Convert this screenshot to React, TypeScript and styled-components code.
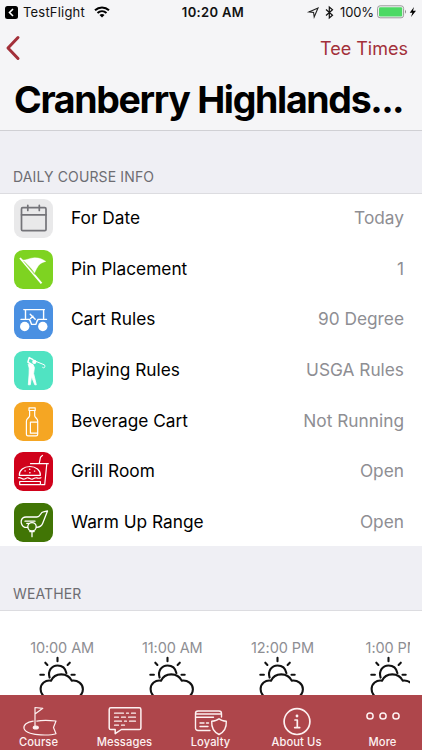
import React from 'react';
import styled, { createGlobalStyle } from 'styled-components';

const GlobalStyle = createGlobalStyle`
  * { box-sizing: border-box; }
  body { margin: 0; background: #fff; font-family: Inter, "Liberation Sans", sans-serif; }
  svg { display: block; flex: none; overflow: visible; }
`;

const Screen = styled.main`
  width: 422px;
  height: 750px;
  overflow: hidden;
  display: flex;
  flex-direction: column;
  background: #fff;
`;

const Header = styled.header`
  height: 131px;
  flex: none;
  background: #f5f5f7;
  border-bottom: 1px solid #d0d0d4;
`;

const StatusBar = styled.div`
  height: 24px;
  display: grid;
  grid-template-columns: 1fr auto 1fr;
  align-items: center;
  padding: 0 6px 0 5px;
  font-size: 13px;
  color: #111;
`;

const StatusGroup = styled.div<{ $end?: boolean }>`
  display: flex;
  align-items: center;
  justify-content: ${p => (p.$end ? 'flex-end' : 'flex-start')};
`;

const AppName = styled.span`
  margin: 0 9px 0 5px;
  letter-spacing: 0.2px;
`;

const Clock = styled.span`
  font-weight: 600;
  letter-spacing: 0.35px;
  padding-left: 5px;
`;

const BluetoothIcon = styled.svg`
  margin-left: 6px;
`;

const Percent = styled.span`
  margin: 0 3px 0 6px;
  letter-spacing: -0.1px;
`;

const NavBar = styled.nav`
  height: 48px;
  display: flex;
  align-items: center;
  justify-content: space-between;
  padding: 0 14px 0 6px;
`;

const NavLink = styled.span`
  color: #a3303a;
  font-size: 18px;
  letter-spacing: 0;
`;

const Title = styled.h1`
  margin: 0;
  padding: 5px 0 0 14px;
  font-size: 37.5px;
  line-height: 46px;
  font-weight: 700;
  letter-spacing: -1.33px;
  white-space: nowrap;
  color: #000;
`;

const Ellipsis = styled.span`
  letter-spacing: -1.7px;
`;

const SectionHeader = styled.h2<{ $height: number }>`
  height: ${p => p.$height}px;
  flex: none;
  margin: 0;
  display: flex;
  align-items: flex-end;
  padding: 0 13px 8px;
  background: #efeff4;
  border-bottom: 1px solid #dcdce0;
  color: #6d6d72;
  font-size: 14px;
  line-height: 17px;
  font-weight: 400;
  letter-spacing: 0.13px;
`;

const List = styled.ul`
  height: 353px;
  flex: none;
  margin: -1px 0 0;
  padding: 0.4px 0 0;
  list-style: none;
  display: grid;
  grid-template-rows: repeat(7, 50.6px);
`;

const Row = styled.li`
  display: flex;
  align-items: center;
  padding: 0 18px 0 14px;
  font-size: 17.3px;
  line-height: 20px;
  color: #000;
`;

const Tile = styled.span<{ $color: string; $ink?: string }>`
  width: 39px;
  height: 39px;
  margin-right: 18px;
  border-radius: 9px;
  background: ${p => p.$color};
  color: ${p => p.$ink || '#fff'};
`;

const RowLabel = styled.span`
  flex: 1;
  padding-bottom: 1px;
`;

const RowValue = styled.span`
  padding-bottom: 1px;
  color: #8e8e93;
`;

const Forecast = styled.section`
  flex: 1;
  min-height: 0;
  margin-right: 12px;
  padding: 27px 0 0 7px;
  display: flex;
  overflow: hidden;
`;

const Hour = styled.div`
  width: 110.2px;
  flex: none;
  display: flex;
  flex-direction: column;
  align-items: center;
  color: #8e8e93;
  font-size: 14.5px;
  line-height: 20px;
  letter-spacing: -0.1px;
  white-space: nowrap;
`;

const HourIcon = styled.span`
  margin: -2px 2px 0 0;
  color: #111;
`;

const TabBar = styled.nav`
  height: 55px;
  flex: none;
  display: grid;
  grid-template-columns: repeat(5, 78px);
  column-gap: 8px;
  background: #ae464b;
  color: #fff;
`;

const Tab = styled.div`
  display: flex;
  flex-direction: column;
  align-items: center;
  padding: 10px 1px 0 0;
  font-size: 11.2px;
  font-weight: 500;
  line-height: 14px;
  white-space: nowrap;
  color: #fdf1f1;
  letter-spacing: 0.1px;
`;

const TabIcon = styled.span`
  height: 30px;
`;

type DrawingProps = { w?: number; h?: number; sw?: number; children: React.ReactNode };

const Drawing = ({ w = 39, h = 39, sw = 1.2, children }: DrawingProps) => (
  <svg width={w} height={h} viewBox={`0 0 ${w} ${h}`} fill="none" stroke="currentColor" strokeWidth={sw} strokeLinecap="round" strokeLinejoin="round">
    {children}
  </svg>
);

const Calendar = () => (
  <Drawing sw={1.7}>
    <rect x="7.5" y="8.7" width="24.5" height="23" rx="1.2" />
    <path d="M7.5 15.8H32M13.8 6.3v5.2M25.3 6.3v5.2" />
  </Drawing>
);
const Flag = () => (
  <Drawing>
    <path d="M6 8L27.5 33.3" strokeWidth="1.9" strokeLinecap="butt" />
    <path d="M8.5 10.2C13 10.4 15.5 7.9 20.5 7.8C25.5 7.7 28.5 9.2 31.8 11.4C25.5 12.8 23.3 16.5 20.6 22.8C18.8 19.5 13 13.2 8.5 10.2Z" fill="currentColor" strokeWidth=".4" />
    <path d="M10 11.5L20.6 24.3" stroke="#7ed321" strokeWidth=".5" />
  </Drawing>
);
const Cart = () => (
  <Drawing sw={1.4}>
    <path d="M9.8 9.6H30.4M11.5 10V18.5M29.6 10V18.5M16.2 14.2l5 5M16.5 18.5l2.5-2.3" />
    <path d="M7 19.4h8.2c1.4 1.2 1.6 3.6 2.4 5h4.2c.8-1.4 1-3.8 2.4-5h8.3" />
    <circle cx="10.7" cy="26.5" r="4.7" fill="currentColor" stroke="none" />
    <circle cx="28.8" cy="26.5" r="4.7" fill="currentColor" stroke="none" />
  </Drawing>
);
const Golfer = () => (
  <Drawing>
    <path d="M19 8.6L15.2 6.6L13.9 11.2L18.5 14" strokeWidth="1.5" />
    <circle cx="20.3" cy="10.9" r="2.1" fill="currentColor" stroke="none" />
    <path d="M14.5 13.2L19 13.5L20.4 16.5L19.6 22.5L22.3 33.8L20.8 33.8L17.5 25.6L16.3 33.8L14.3 33.8L15.1 23L15.2 17.5Z" fill="currentColor" strokeWidth=".8" />
    <path d="M22 10.4L30.5 13.9C31.5 16 30.3 17.7 28.7 16.5" strokeWidth="1" />
  </Drawing>
);
const Bottle = () => (
  <Drawing>
    <path d="M15 5.8h6.2v2.7H15zM15.6 8.5v5.2c0 2-3.2 2.8-3.2 5.2v13.3c0 1 .7 1.6 1.6 1.6h8.2c.9 0 1.5-.6 1.5-1.6V18.9c0-2.4-3-3.2-3-5.2V8.5M23.7 20.2h-7.3v11h7.3" />
  </Drawing>
);
const Burger = () => (
  <Drawing>
    <path d="M5.3 23.3c-.2-5 4.6-8.8 10.6-8.8s10.7 3.8 10.5 8.8zM4.5 25.8c2-1 3.2 1.6 5.2 1.4s2.4-1.7 4.3-1.4 2.4 1.8 4.4 1.4 2.4-1.8 4.2-1.4 2.2 1 4.4 0M5.7 29.5h20.7v3.1H5.7z" />
    <path d="M16.5 11.7h17.8M25.2 11.7l1.3-6.5 2-1.8M32.8 12l-2.1 20.7h-3.2" />
    <path d="M11 18.9h.2M15.6 17.2h.2M20.5 19.1h.2M15.8 20.7h.2" strokeWidth="1.4" />
  </Drawing>
);
const Club = () => (
  <Drawing sw={1.3}>
    <path d="M13.6 24.4H10.8C8.5 23.6 6.8 20.5 7.2 18C7.7 15.5 9.3 14 12 14H23C26.8 14 26.2 9.2 29.3 8.8L33.5 8L28.8 20C27.8 22.8 25.8 24.2 22.6 24.4M11 18.2h10M12.8 20.4h2" />
    <circle cx="18" cy="23.8" r="4.2" />
    <path d="M15.8 28.6h4.4M18 28.6V33.7" />
  </Drawing>
);

const PartlyCloudy = () => (
  <Drawing w={50} h={50} sw={2.1}>
    <path d="M13.6 21.6C11.4 14.6 16 9.5 21.5 9.5c4.6 0 8 3 8.9 7.6M21.5 1.8v3.5M9.3 6.7l2.1 2.2M33.8 6.7l-2.2 2.2M4.3 18.8h3.6M35.5 18.8h3.2" />
    <path d="M12.8 41.5C7.4 41.5 4.6 37.5 4.6 33c0-5.2 4.7-9.3 10.4-8.3 3.8-8.4 16.5-8.5 20.7-.1 6-.8 11.2 3.2 11.2 8.6 0 4.6-3 8.3-7.8 8.3z" />
  </Drawing>
);

const CourseIcon = () => (
  <Drawing w={36} h={32} sw={1.2}>
    <path d="M14 22V2.5l7.8.8L14 9" />
    <path d="M12.2 16.2C6 17 2.2 20 3 23.4c1 4.5 10 6.3 16.8 6.5 5.5.2 11.3.2 15.2-1.2l-2.5-6.2 2.5-6.5c-6.2-.6-13.5-1-19.2.2" />
    <ellipse cx="14.8" cy="22.5" rx="2.5" ry="1.5" fill="currentColor" />
  </Drawing>
);
const MessageIcon = () => (
  <Drawing w={34} h={28} sw={1.5}>
    <path d="M2.8 2.8h28.5c1 0 1.6.6 1.6 1.6v18.5c0 1-.6 1.6-1.6 1.6H13.4L7.2 28.7V24.5H2.8c-1 0-1.6-.6-1.6-1.6V4.4c0-1 .6-1.6 1.6-1.6z" />
    <path d="M6.5 8.2h9M18.5 8.2h2M23.5 8.2h4M6.5 12.2h4M13.5 12.2h4M20.5 12.2h7M6.5 16.2h7M16.5 16.2h2M21.5 16.2h6M6.5 20.2h4M13.5 20.2h3" strokeWidth="1.2" />
  </Drawing>
);
const LoyaltyIcon = () => (
  <Drawing w={34} h={28} sw={1.4}>
    <path d="M16 25.5H4c-1.5 0-2.5-1-2.5-2.5V8.5C1.5 7 2.5 6 4 6h21c1.5 0 2.5 1 2.5 2.5V12M1.5 9h26M1.5 12.3h18M6 18h4M12.5 18h2M6 21.5h8" />
    <path d="M25 13.8c2 2 4.3 2.3 7.3 2.4.4 6.4-1.7 10.5-7.3 13.3-5.6-2.8-7.7-6.9-7.3-13.3 3-.1 5.3-.4 7.3-2.4z" />
  </Drawing>
);
const InfoIcon = () => (
  <Drawing w={30} h={30} sw={1.7}>
    <circle cx="15" cy="16.6" r="12.9" />
    <path d="M13 15h2.3v7.4M12.7 22.6h5" />
    <circle cx="15" cy="11" r="1.4" fill="currentColor" stroke="none" />
  </Drawing>
);
const MoreIcon = () => (
  <Drawing w={36} h={28} sw={1.5}>
    <circle cx="5" cy="11" r="3.1" />
    <circle cx="18" cy="11" r="3.1" />
    <circle cx="31" cy="11" r="3.1" />
  </Drawing>
);

const rows = [
  { label: 'For Date', value: 'Today', color: '#e9e9ea', ink: '#747479', Icon: Calendar },
  { label: 'Pin Placement', value: '1', color: '#7ed321', Icon: Flag },
  { label: 'Cart Rules', value: '90 Degree', color: '#4a90e2', Icon: Cart },
  { label: 'Playing Rules', value: 'USGA Rules', color: '#50e3c2', Icon: Golfer },
  { label: 'Beverage Cart', value: 'Not Running', color: '#f5a623', Icon: Bottle },
  { label: 'Grill Room', value: 'Open', color: '#d0021b', Icon: Burger },
  { label: 'Warm Up Range', value: 'Open', color: '#417505', Icon: Club },
];

const hours = ['10:00 AM', '11:00 AM', '12:00 PM', '1:00 PM'];

const tabs = [
  { label: 'Course', Icon: CourseIcon },
  { label: 'Messages', Icon: MessageIcon },
  { label: 'Loyalty', Icon: LoyaltyIcon },
  { label: 'About Us', Icon: InfoIcon },
  { label: 'More', Icon: MoreIcon },
];

export default function App() {
  return (
    <Screen>
      <GlobalStyle />
      <Header>
        <StatusBar>
          <StatusGroup>
            <svg width="13" height="13" viewBox="0 0 13 13">
              <rect width="13" height="13" rx="2.5" fill="#000" />
              <path d="M8 3L4.5 6.5 8 10" fill="none" stroke="#fff" strokeWidth="1.6" />
            </svg>
            <AppName>TestFlight</AppName>
            <svg width="16" height="12" viewBox="0 0 16 12" fill="none" stroke="#000" strokeWidth="2">
              <path d="M1 4.3c4-3.8 10-3.8 14 0M3.5 7c2.6-2.4 6.4-2.4 9 0" />
              <path d="M8 11.5L5.5 9c1.4-1.3 3.6-1.3 5 0z" fill="#000" stroke="none" />
            </svg>
          </StatusGroup>
          <Clock>10:20 AM</Clock>
          <StatusGroup $end>
            <svg width="11" height="11" viewBox="0 0 11 11" fill="none" stroke="#222" strokeWidth="1.1">
              <path d="M10 1L6.2 10 5.6 5.4 1 4.9z" />
            </svg>
            <BluetoothIcon width="9" height="13" viewBox="0 0 9 13" fill="none" stroke="#111" strokeWidth="1.2">
              <path d="M1 3.5l6.5 5.7-3.2 2.8V1l3.2 2.8L1 9.5" />
            </BluetoothIcon>
            <Percent>100%</Percent>
            <svg width="39" height="14" viewBox="0 0 39 14">
              <rect x=".6" y=".8" width="26" height="12" rx="2.5" fill="none" stroke="#999" />
              <rect x="2" y="2.2" width="23.2" height="9.2" rx="1.2" fill="#4cd964" />
              <path d="M28 4.8q2 2 0 4z" fill="#888" />
              <path d="M37 2l-4.3 5.7h2.7L34 12l5-6.2h-3z" fill="#000" />
            </svg>
          </StatusGroup>
        </StatusBar>
        <NavBar>
          <svg width="14" height="24" viewBox="0 0 14 24" fill="none" stroke="#a3303a" strokeWidth="3" strokeLinecap="round" strokeLinejoin="round">
            <path d="M12 1.5L2 12l10 10.5" />
          </svg>
          <NavLink>Tee Times</NavLink>
        </NavBar>
        <Title>Cranberry Highlands<Ellipsis>...</Ellipsis></Title>
      </Header>

      <SectionHeader $height={63}>DAILY COURSE INFO</SectionHeader>
      <List>
        {rows.map(({ label, value, color, ink, Icon }) => (
          <Row key={label}>
            <Tile $color={color} $ink={ink}><Icon /></Tile>
            <RowLabel>{label}</RowLabel>
            <RowValue>{value}</RowValue>
          </Row>
        ))}
      </List>

      <SectionHeader $height={65}>WEATHER</SectionHeader>
      <Forecast>
        {hours.map(time => (
          <Hour key={time}>
            {time}
            <HourIcon><PartlyCloudy /></HourIcon>
          </Hour>
        ))}
      </Forecast>

      <TabBar>
        {tabs.map(({ label, Icon }) => (
          <Tab key={label}>
            <TabIcon><Icon /></TabIcon>
            {label}
          </Tab>
        ))}
      </TabBar>
    </Screen>
  );
}
